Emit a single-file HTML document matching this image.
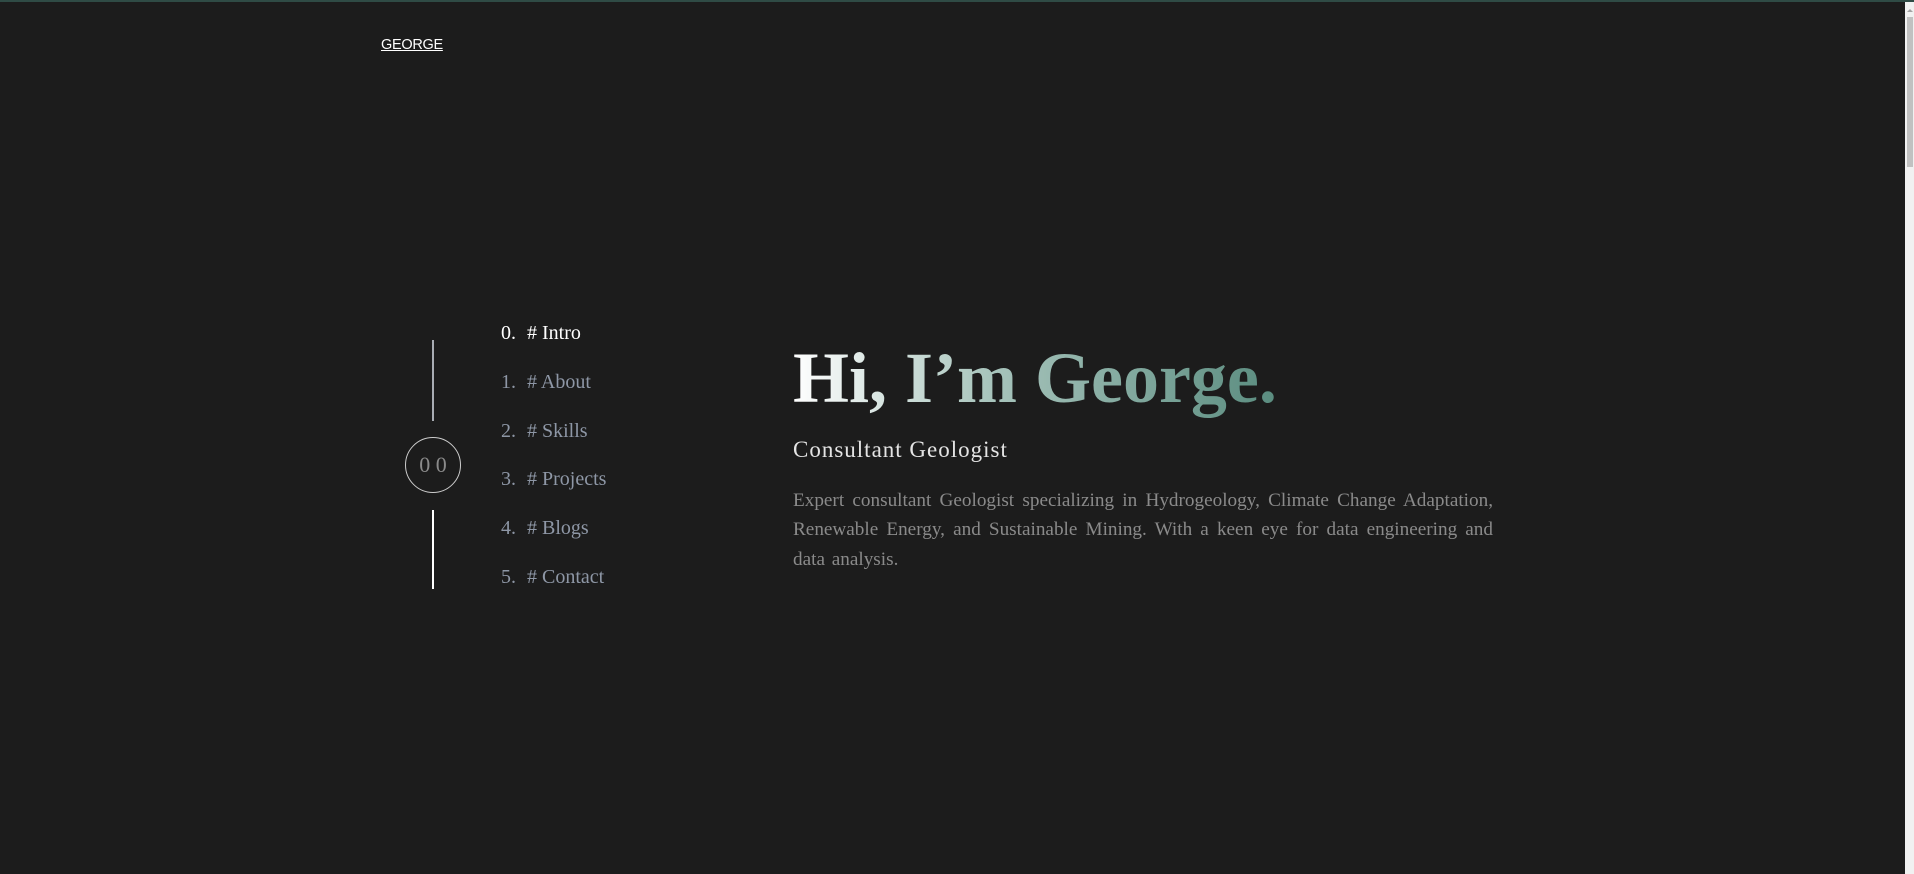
<!DOCTYPE html>
<html><head><style>
html,body{margin:0;padding:0;}
body{width:1914px;height:874px;background:#1c1c1c;position:relative;overflow:hidden;font-family:"Liberation Serif",serif;}
.top{position:absolute;left:0;top:0;width:1914px;height:2px;background:#2f4b45;}
.sb{position:absolute;left:1905px;top:2px;width:9px;height:872px;background:#f1f1f1;}
.sb .th{position:absolute;left:2px;top:15px;width:6px;height:150px;background:#c1c1c1;}
.sb .ar{position:absolute;left:2px;top:7px;width:0;height:0;border-left:3px solid transparent;border-right:3px solid transparent;border-bottom:3px solid #a3a3a3;}
.logo{position:absolute;left:381px;top:37px;font-family:"Liberation Sans",sans-serif;font-size:14.5px;color:#fff;text-decoration:underline;letter-spacing:-0.3px;}
.l1{position:absolute;left:432px;top:340px;width:2px;height:81px;background:#a8acb3;}
.l2{position:absolute;left:432px;top:510px;width:2px;height:79px;background:#fff;}
.circ{position:absolute;left:405px;top:437px;width:54px;height:54px;border:1.5px solid #ccc;border-radius:50%;color:#8a8a8a;font-size:22px;text-align:center;line-height:54px;}
.nav{position:absolute;left:501px;top:322px;font-size:20px;color:#8e97a6;}
.nav div{height:48.8px;}
.nav span{display:inline-block;width:26px;}
.nav .on{color:#fff;}
h1{position:absolute;left:793px;top:336px;margin:0;font-size:72px;font-weight:bold;line-height:84px;white-space:nowrap;background:linear-gradient(90deg,#fff 0%,#a9c5bd 40%,#5a8c7f 100%);-webkit-background-clip:text;background-clip:text;color:transparent;}
.sub{position:absolute;left:793px;top:437px;font-size:23px;color:#e4e4e4;letter-spacing:1px;}
.p{position:absolute;left:793px;top:486px;width:700px;font-size:19.2px;line-height:29.3px;color:#8a8a8a;text-align:justify;word-spacing:2px;}
</style></head><body>
<div class="top"></div>
<div class="sb"><div class="ar"></div><div class="th"></div></div>
<div class="logo">GEORGE</div>
<div class="l1"></div><div class="l2"></div>
<div class="circ">0 0</div>
<div class="nav">
<div class="on"><span>0.</span># Intro</div>
<div><span>1.</span># About</div>
<div><span>2.</span># Skills</div>
<div><span>3.</span># Projects</div>
<div><span>4.</span># Blogs</div>
<div><span>5.</span># Contact</div>
</div>
<h1>Hi, I’m George.</h1>
<div class="sub">Consultant Geologist</div>
<div class="p">Expert consultant Geologist specializing in Hydrogeology, Climate Change Adaptation, Renewable Energy, and Sustainable Mining. With a keen eye for data engineering and data analysis.</div>
</body></html>
